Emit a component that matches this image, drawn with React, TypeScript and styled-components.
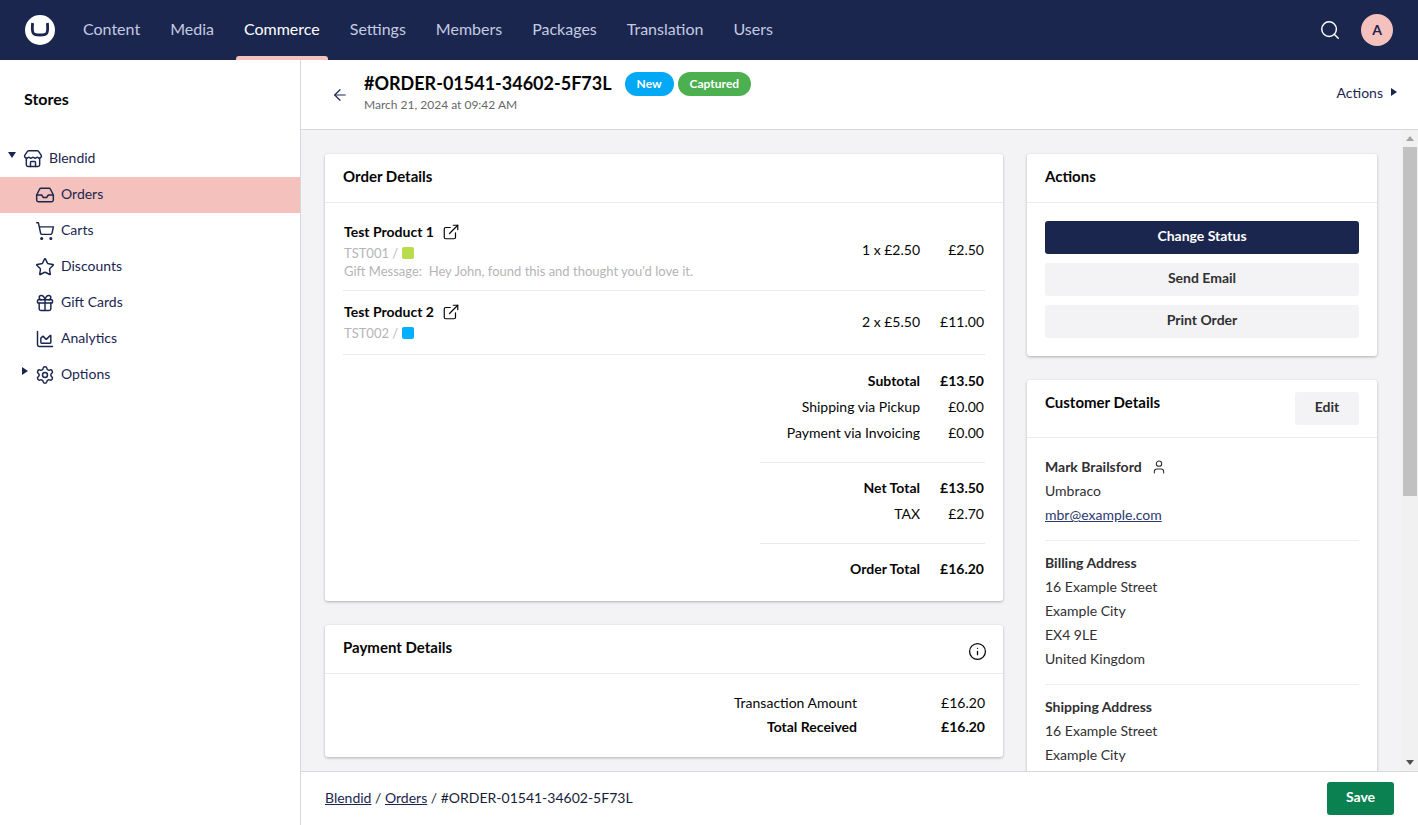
import React from "react";
import styled, { createGlobalStyle } from "styled-components";
import {
  ArrowLeft,
  ChartArea,
  ExternalLink,
  Gift,
  Inbox,
  Info,
  Search,
  Settings,
  ShoppingCart,
  Star,
  Store,
  User,
} from "lucide-react";

const Global = createGlobalStyle`
  html, body { margin: 0; height: 100%; overflow: hidden; }
  body { font-family: Lato, "Liberation Sans", sans-serif; font-size: 14px; color: #060606; background: #fff; }
  * { box-sizing: border-box; }
`;

const Page = styled.div`
  width: 100vw;
  height: 100vh;
  display: grid;
  grid-template-rows: 60px 1fr;
`;

const TopBar = styled.header`
  background: #1b264f;
  display: flex;
  align-items: stretch;
  padding: 0 25px 0 25px;
`;

const Logo = styled.svg`
  width: 30px;
  height: 30px;
  align-self: center;
  margin-right: 13px;
  flex: none;
`;

const NavList = styled.nav`
  display: flex;
  align-items: stretch;
`;

const NavItem = styled.a<{ $active?: boolean }>`
  position: relative;
  display: flex;
  align-items: center;
  padding: 0 15px 4px;
  font-size: 16px;
  color: ${(p) => (p.$active ? "#fff" : "#c4cbe0")};
  ${(p) =>
    p.$active &&
    `&::after {
      content: "";
      position: absolute;
      left: 7px;
      right: 7px;
      bottom: 0;
      height: 4px;
      background: #f5c1bc;
      border-radius: 3px 3px 0 0;
    }`}
`;

const TopRight = styled.div`
  margin-left: auto;
  display: flex;
  align-items: center;
  gap: 20px;
  color: #fff;
`;

const Avatar = styled.div`
  width: 32px;
  height: 32px;
  border-radius: 50%;
  background: #f5c1bc;
  color: #1b264f;
  font-weight: 700;
  font-size: 14px;
  padding-bottom: 2px;
  display: flex;
  align-items: center;
  justify-content: center;
`;

const Shell = styled.div`
  display: grid;
  grid-template-columns: 301px 1fr;
  min-height: 0;
`;

const Sidebar = styled.aside`
  border-right: 1px solid #d8d7d9;
  background: #fff;
`;

const SidebarTitle = styled.h2`
  margin: 0;
  padding: 29px 24px 0;
  height: 81px;
  font-size: 16px;
  line-height: 20px;
  font-weight: 700;
  color: #060606;
`;

const TreeRow = styled.div<{ $depth: number; $active?: boolean }>`
  height: 36px;
  display: flex;
  align-items: center;
  gap: 6px;
  padding-left: ${(p) => (p.$depth === 0 ? 8 : 20)}px;
  font-size: 14px;
  color: #1b264f;
  background: ${(p) => (p.$active ? "#f5c1bc" : "transparent")};
`;

const TreeLabel = styled.span`
  margin-bottom: 4px;
`;

const TreeIcon = styled.span`
  display: flex;
  margin-top: 1px;
  margin-bottom: 1px;
`;

const CaretSlot = styled.span`
  width: 9px;
  flex: none;
  display: flex;
  align-items: center;
  margin-bottom: 4px;
`;

const Caret = styled.span<{ $dir: "down" | "right" }>`
  display: block;
  width: 0;
  height: 0;
  ${(p) =>
    p.$dir === "down"
      ? `border-left: 4.5px solid transparent; border-right: 4.5px solid transparent; border-top: 6px solid #1b264f; margin-top: -4px;`
      : `border-top: 4.5px solid transparent; border-bottom: 4.5px solid transparent; border-left: 6px solid #1b264f; margin-left: 2px; margin-top: -4px;`}
`;

const Workspace = styled.main`
  display: grid;
  grid-template-rows: 70px 1fr 54px;
  min-width: 0;
  min-height: 0;
`;

const WorkspaceHeader = styled.div`
  display: flex;
  align-items: flex-start;
  padding: 0 21px 0 30px;
  border-bottom: 1px solid #d8d7d9;
  background: #fff;
`;

const BackButton = styled.span`
  width: 18px;
  margin-top: 26px;
  margin-right: 15px;
  color: #1b264f;
  display: flex;
`;

const TitleBlock = styled.div`
  padding-top: 11px;
`;

const TitleLine = styled.div`
  display: flex;
  align-items: center;
  gap: 4px;
`;

const OrderTitle = styled.h1`
  margin: 0 9px 0 0;
  font-size: 18px;
  line-height: 24px;
  font-weight: 700;
  color: #060606;
`;

const Badge = styled.span<{ $bg: string }>`
  height: 24px;
  margin: 1px 0 -1px;
  padding: 0 12px 1px;
  border-radius: 12px;
  background: ${(p) => p.$bg};
  color: #fff;
  font-size: 12px;
  font-weight: 700;
  display: flex;
  align-items: center;
`;

const DateLine = styled.div`
  font-size: 12px;
  line-height: 16px;
  margin-top: 2px;
  color: #68676b;
`;

const HeaderAction = styled.div`
  margin-left: auto;
  margin-top: 22px;
  height: 20px;
  display: flex;
  align-items: center;
  gap: 8px;
  font-size: 14px;
  color: #1b264f;
  & > span {
    margin: 0;
  }
`;

const ScrollArea = styled.div`
  display: grid;
  grid-template-columns: 1fr 17px;
  background: #f3f3f5;
  min-height: 0;
`;

const ScrollContent = styled.div`
  overflow: hidden;
  min-width: 0;
  min-height: 0;
`;

const ScrollRail = styled.div`
  background: #f1f1f1;
  display: flex;
  flex-direction: column;
  min-height: 0;
`;

const ScrollStep = styled.div`
  height: 17px;
  flex: none;
  display: flex;
  align-items: center;
  justify-content: center;
`;

const StepArrow = styled.span<{ $up?: boolean }>`
  width: 0;
  height: 0;
  border-left: 4px solid transparent;
  border-right: 4px solid transparent;
  ${(p) => (p.$up ? "border-bottom: 5px solid #a3a3a3;" : "border-top: 5px solid #505050;")}
`;

const ScrollThumb = styled.div`
  height: 349px;
  flex: none;
  margin: 0 1px 0 2px;
  background: #c1c1c1;
`;

const ScrollSpacer = styled.div`
  flex: 1;
`;

const Columns = styled.div`
  display: grid;
  grid-template-columns: 1fr 350px;
  gap: 24px;
  padding: 24px;
  align-items: start;
`;

const Stack = styled.div`
  display: flex;
  flex-direction: column;
  gap: 24px;
  min-width: 0;
`;

const Card = styled.section`
  background: #fff;
  border-radius: 3px;
  box-shadow: 0 1px 3px rgba(0, 0, 0, 0.28);
`;

const CardHeader = styled.div<{ $tight?: boolean }>`
  display: flex;
  justify-content: space-between;
  align-items: flex-start;
  padding: 12px 18px ${(p) => (p.$tight ? 12 : 16)}px;
  border-bottom: 1px solid #e9e9eb;
`;

const CardTitle = styled.h3`
  margin: 0;
  font-size: 15px;
  line-height: 20px;
  font-weight: 700;
  color: #060606;
`;

const InfoIcon = styled.span`
  display: flex;
  margin-top: 5px;
  height: 15px;
  margin-right: -2px;
`;

const OrderBody = styled.div`
  padding: 8px 18px 19px;
`;

const ProductRow = styled.div`
  display: flex;
  align-items: center;
  padding: 11px 0;
  border-bottom: 1px solid #e9e9eb;
`;

const ProductInfo = styled.div`
  flex: 1;
  padding-left: 1px;
`;

const ProductName = styled.div`
  display: flex;
  align-items: center;
  gap: 8px;
  font-size: 14px;
  line-height: 20px;
  font-weight: 700;
`;

const Sku = styled.div`
  display: flex;
  align-items: center;
  gap: 4px;
  height: 21px;
  font-size: 13px;
  color: #b5b4b7;
`;

const Swatch = styled.span<{ $color: string }>`
  width: 12px;
  height: 12px;
  border-radius: 2px;
  background: ${(p) => p.$color};
`;

const GiftMessage = styled.div`
  font-size: 13px;
  line-height: 16px;
  color: #b5b4b7;
`;

const LineAmounts = styled.div`
  display: flex;
  margin-bottom: 2px;
  margin-right: 1px;
`;

const Qty = styled.div`
  width: 100px;
  text-align: right;
`;

const Price = styled.div`
  width: 64px;
  text-align: right;
`;

const Totals = styled.div`
  padding-top: 13px;
`;

const TotalRow = styled.div<{ $bold?: boolean }>`
  display: flex;
  justify-content: flex-end;
  line-height: 26px;
  height: 26px;
  padding-right: 1px;
  font-weight: ${(p) => (p.$bold ? 700 : 400)};
`;

const TotalRule = styled.hr`
  width: 225px;
  margin: 16px 0 12px auto;
  border: 0;
  border-top: 1px solid #e9e9eb;
`;

const PaymentBody = styled.div`
  padding: 17px 18px 18px;
`;

const PaymentRow = styled.div<{ $bold?: boolean }>`
  display: flex;
  justify-content: flex-end;
  line-height: 24px;
  font-weight: ${(p) => (p.$bold ? 700 : 400)};
`;

const PaymentValue = styled.div`
  width: 128px;
  text-align: right;
`;

const ActionsBody = styled.div`
  padding: 18px;
  display: flex;
  flex-direction: column;
  gap: 9px;
`;

const Button = styled.button<{ $look: "primary" | "plain" | "save"; $width?: number }>`
  height: 33px;
  width: ${(p) => (p.$width ? `${p.$width}px` : "100%")};
  border: 0;
  border-radius: 3px;
  padding: 0 0 4px;
  font-family: inherit;
  font-size: 14px;
  font-weight: 700;
  flex: none;
  background: ${(p) =>
    p.$look === "primary" ? "#1b264f" : p.$look === "save" ? "#0b8152" : "#f3f3f5"};
  color: ${(p) => (p.$look === "plain" ? "#303033" : "#fff")};
`;

const CustomerBody = styled.div`
  padding: 17px 18px 72px;
  color: #303033;
  line-height: 24px;
`;

const StrongLine = styled.div`
  display: flex;
  align-items: center;
  gap: 9px;
  font-weight: 700;
  color: #303033;
`;

const MailLink = styled.a`
  color: #2c3a6e;
  text-decoration: underline;
`;

const SectionRule = styled.hr`
  border: 0;
  border-top: 1px solid #f0f0f2;
  margin: 13px 0 10px;
`;

const Footer = styled.footer`
  display: flex;
  align-items: center;
  justify-content: space-between;
  padding: 0 24px;
  background: #fff;
  border-top: 1px solid #d8d7d9;
`;

const Crumbs = styled.div`
  font-size: 14px;
  color: #161d38;
  margin-bottom: 2px;
  a {
    color: #1b264f;
    text-decoration: underline;
  }
`;

const treeItems = [
  { label: "Orders", Icon: Inbox, active: true },
  { label: "Carts", Icon: ShoppingCart },
  { label: "Discounts", Icon: Star },
  { label: "Gift Cards", Icon: Gift },
  { label: "Analytics", Icon: ChartArea },
];

const navItems = ["Content", "Media", "Commerce", "Settings", "Members", "Packages", "Translation", "Users"];

export default function App() {
  return (
    <Page>
      <Global />
      <TopBar>
        <Logo viewBox="0 0 30 30">
          <circle cx="15" cy="15" r="15" fill="#fff" />
          <path
            d="M7.6 8 C7.2 12 7.3 15.5 7.9 17.4 C8.7 19.6 11.4 20 15 20 C18.6 20 21.3 19.6 22.1 17.4 C22.7 15.5 22.8 12 22.4 8"
            fill="none"
            stroke="#1b264f"
            strokeWidth="2.8"
          />
        </Logo>
        <NavList>
          {navItems.map((n) => (
            <NavItem key={n} $active={n === "Commerce"}>
              {n}
            </NavItem>
          ))}
        </NavList>
        <TopRight>
          <Search size={22} strokeWidth={1.6} />
          <Avatar>A</Avatar>
        </TopRight>
      </TopBar>
      <Shell>
        <Sidebar>
          <SidebarTitle>Stores</SidebarTitle>
          <TreeRow $depth={0}>
            <CaretSlot>
              <Caret $dir="down" />
            </CaretSlot>
            <TreeIcon>
              <Store size={20} strokeWidth={1.75} />
            </TreeIcon>
            <TreeLabel>Blendid</TreeLabel>
          </TreeRow>
          {treeItems.map(({ label, Icon, active }) => (
            <TreeRow key={label} $depth={1} $active={active}>
              <CaretSlot />
              <TreeIcon>
                <Icon size={20} strokeWidth={1.75} />
              </TreeIcon>
              <TreeLabel>{label}</TreeLabel>
            </TreeRow>
          ))}
          <TreeRow $depth={1}>
            <CaretSlot>
              <Caret $dir="right" />
            </CaretSlot>
            <TreeIcon>
              <Settings size={20} strokeWidth={1.75} />
            </TreeIcon>
            <TreeLabel>Options</TreeLabel>
          </TreeRow>
        </Sidebar>
        <Workspace>
          <WorkspaceHeader>
            <BackButton>
              <ArrowLeft size={18} strokeWidth={1.6} />
            </BackButton>
            <TitleBlock>
              <TitleLine>
                <OrderTitle>#ORDER-01541-34602-5F73L</OrderTitle>
                <Badge $bg="#03a9f4">New</Badge>
                <Badge $bg="#4caf50">Captured</Badge>
              </TitleLine>
              <DateLine>March 21, 2024 at 09:42 AM</DateLine>
            </TitleBlock>
            <HeaderAction>
              Actions
              <Caret $dir="right" />
            </HeaderAction>
          </WorkspaceHeader>
          <ScrollArea>
            <ScrollContent>
              <Columns>
                <Stack>
                  <Card>
                    <CardHeader>
                      <CardTitle>Order Details</CardTitle>
                    </CardHeader>
                    <OrderBody>
                      <ProductRow>
                        <ProductInfo>
                          <ProductName>
                            Test Product 1 <ExternalLink size={18} strokeWidth={1.6} />
                          </ProductName>
                          <Sku>
                            TST001 / <Swatch $color="#b8dc4d" />
                          </Sku>
                          <GiftMessage>Gift Message:&nbsp; Hey John, found this and thought you'd love it.</GiftMessage>
                        </ProductInfo>
                        <LineAmounts>
                          <Qty>1 x £2.50</Qty>
                          <Price>£2.50</Price>
                        </LineAmounts>
                      </ProductRow>
                      <ProductRow>
                        <ProductInfo>
                          <ProductName>
                            Test Product 2 <ExternalLink size={18} strokeWidth={1.6} />
                          </ProductName>
                          <Sku>
                            TST002 / <Swatch $color="#00b0ff" />
                          </Sku>
                        </ProductInfo>
                        <LineAmounts>
                          <Qty>2 x £5.50</Qty>
                          <Price>£11.00</Price>
                        </LineAmounts>
                      </ProductRow>
                      <Totals>
                        <TotalRow $bold>
                          <div>Subtotal</div>
                          <Price>£13.50</Price>
                        </TotalRow>
                        <TotalRow>
                          <div>Shipping via Pickup</div>
                          <Price>£0.00</Price>
                        </TotalRow>
                        <TotalRow>
                          <div>Payment via Invoicing</div>
                          <Price>£0.00</Price>
                        </TotalRow>
                        <TotalRule />
                        <TotalRow $bold>
                          <div>Net Total</div>
                          <Price>£13.50</Price>
                        </TotalRow>
                        <TotalRow>
                          <div>TAX</div>
                          <Price>£2.70</Price>
                        </TotalRow>
                        <TotalRule />
                        <TotalRow $bold>
                          <div>Order Total</div>
                          <Price>£16.20</Price>
                        </TotalRow>
                      </Totals>
                    </OrderBody>
                  </Card>
                  <Card>
                    <CardHeader>
                      <CardTitle>Payment Details</CardTitle>
                      <InfoIcon>
                        <Info size={19} strokeWidth={1.6} />
                      </InfoIcon>
                    </CardHeader>
                    <PaymentBody>
                      <PaymentRow>
                        <div>Transaction Amount</div>
                        <PaymentValue>£16.20</PaymentValue>
                      </PaymentRow>
                      <PaymentRow $bold>
                        <div>Total Received</div>
                        <PaymentValue>£16.20</PaymentValue>
                      </PaymentRow>
                    </PaymentBody>
                  </Card>
                </Stack>
                <Stack>
                  <Card>
                    <CardHeader>
                      <CardTitle>Actions</CardTitle>
                    </CardHeader>
                    <ActionsBody>
                      <Button $look="primary">Change Status</Button>
                      <Button $look="plain">Send Email</Button>
                      <Button $look="plain">Print Order</Button>
                    </ActionsBody>
                  </Card>
                  <Card>
                    <CardHeader $tight>
                      <CardTitle>Customer Details</CardTitle>
                      <Button $look="plain" $width={64}>
                        Edit
                      </Button>
                    </CardHeader>
                    <CustomerBody>
                      <StrongLine>
                        Mark Brailsford <User size={16} strokeWidth={1.6} />
                      </StrongLine>
                      <div>Umbraco</div>
                      <div>
                        <MailLink>mbr@example.com</MailLink>
                      </div>
                      <SectionRule />
                      <StrongLine>Billing Address</StrongLine>
                      <div>16 Example Street</div>
                      <div>Example City</div>
                      <div>EX4 9LE</div>
                      <div>United Kingdom</div>
                      <SectionRule />
                      <StrongLine>Shipping Address</StrongLine>
                      <div>16 Example Street</div>
                      <div>Example City</div>
                    </CustomerBody>
                  </Card>
                </Stack>
              </Columns>
            </ScrollContent>
            <ScrollRail>
              <ScrollStep>
                <StepArrow $up />
              </ScrollStep>
              <ScrollThumb />
              <ScrollSpacer />
              <ScrollStep>
                <StepArrow />
              </ScrollStep>
            </ScrollRail>
          </ScrollArea>
          <Footer>
            <Crumbs>
              <a>Blendid</a> / <a>Orders</a> / #ORDER-01541-34602-5F73L
            </Crumbs>
            <Button $look="save" $width={67}>
              Save
            </Button>
          </Footer>
        </Workspace>
      </Shell>
    </Page>
  );
}
